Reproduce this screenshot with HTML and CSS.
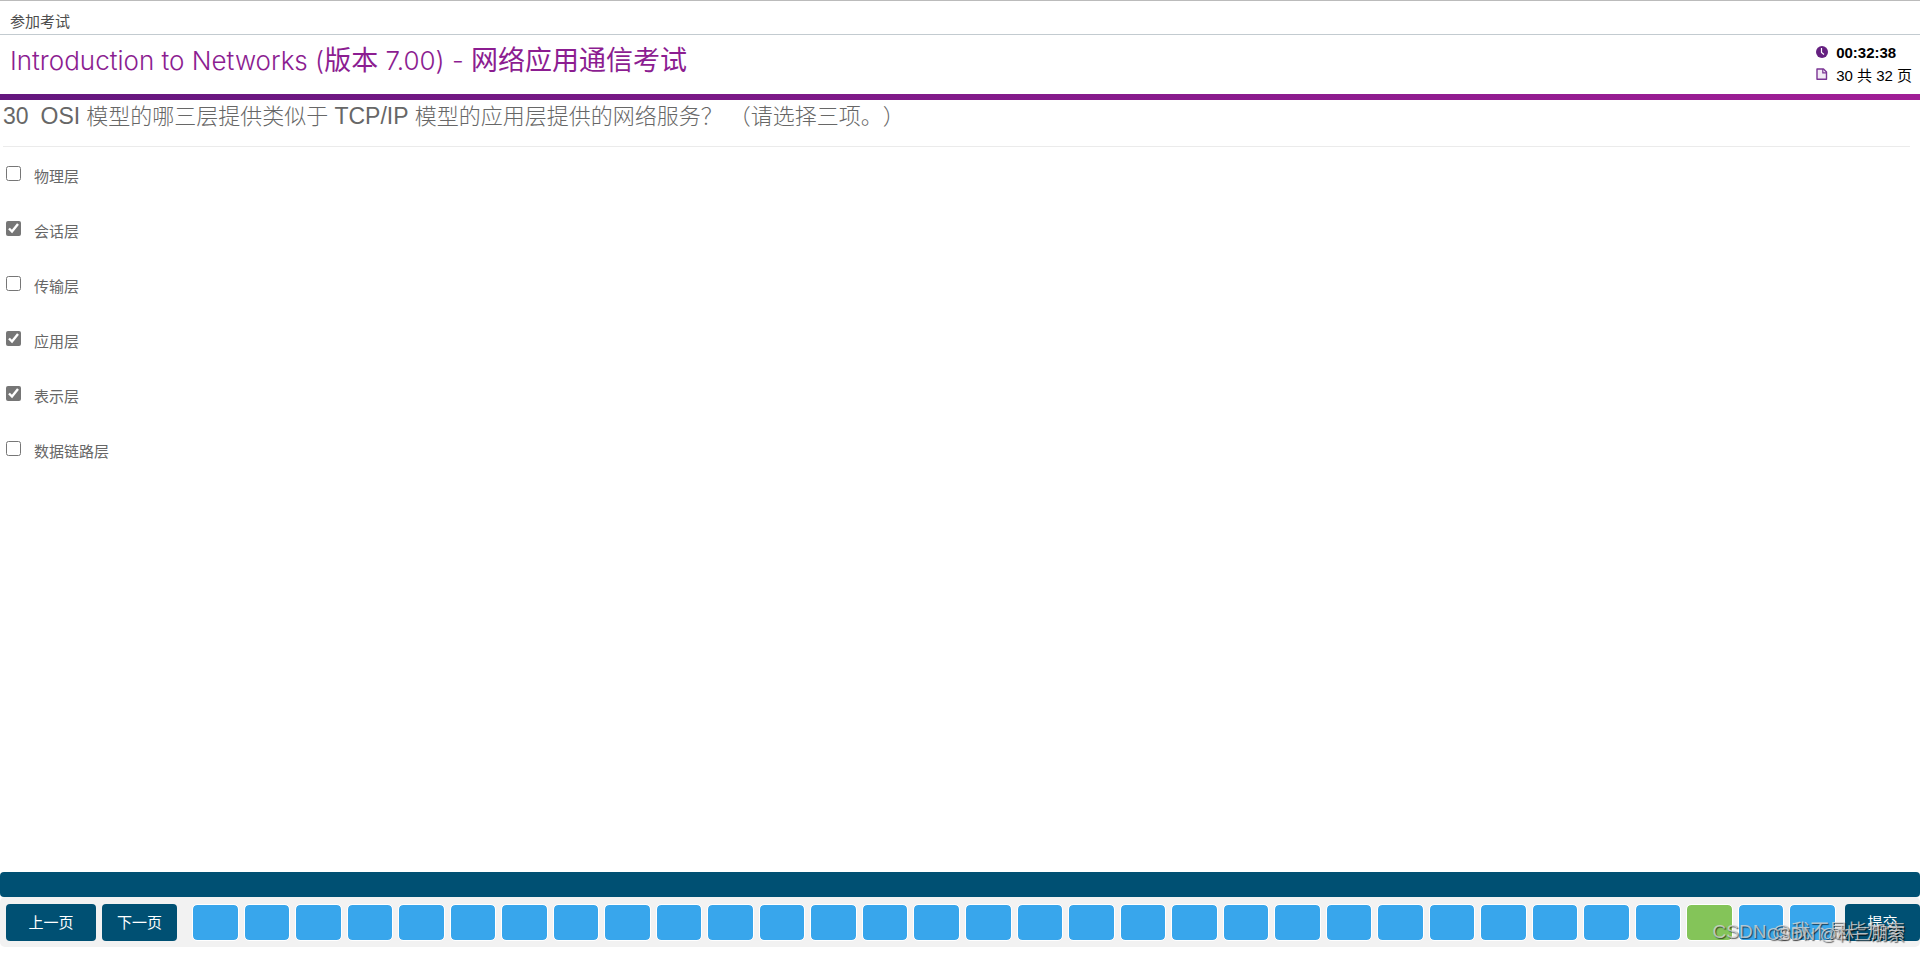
FILE: index.html
```html
<!DOCTYPE html>
<html lang="zh-CN">
<head>
  <meta charset="UTF-8">
  <meta name="viewport" content="width=device-width, initial-scale=1.0">
  <title>参加考试</title>
  <link rel="stylesheet" href="styles.css">
</head>
<body>
  <div class="top-bar">参加考试</div>

  <header class="header">
    <h1>Introduction to Networks (<span class="zh">版本</span> 7.00) - <span class="zh">网络应用通信考试</span></h1>
    <div class="status">
      <div class="status-row timer">
        <svg class="icon" viewBox="0 0 12 12">
          <circle cx="6" cy="6" r="6" fill="#652080"/>
          <path d="M5.5 2v4.5l2.5 2" fill="none" stroke="#fff" stroke-width="1.2"/>
        </svg>
        <span>00:32:38</span>
      </div>
      <div class="status-row">
        <svg class="icon" viewBox="0 0 12 12">
          <path d="M1 1h6.5l3 3v7.2h-9.5z" fill="#f3eaf5" stroke="#7b3494" stroke-width="1.4" stroke-linejoin="round"/>
          <path d="M6.8 1v3.8h3.8" fill="none" stroke="#7b3494" stroke-width="1.2"/>
        </svg>
        <span>30 共 32 页</span>
      </div>
    </div>
  </header>
  <div class="stripe"></div>

  <main class="question">
    <h2><span class="en number">30</span><span class="en">OSI</span> 模型的哪三层提供类似于 <span class="en">TCP/IP</span> 模型的应用层提供的网络服务？ （请选择三项。）</h2>
    <ul class="answers">
      <li><input type="checkbox" id="a1"><label for="a1">物理层</label></li>
      <li><input type="checkbox" id="a2" checked><label for="a2">会话层</label></li>
      <li><input type="checkbox" id="a3"><label for="a3">传输层</label></li>
      <li><input type="checkbox" id="a4" checked><label for="a4">应用层</label></li>
      <li><input type="checkbox" id="a5" checked><label for="a5">表示层</label></li>
      <li><input type="checkbox" id="a6"><label for="a6">数据链路层</label></li>
    </ul>
  </main>

  <footer class="footer">
    <div class="footer-bar"></div>
    <div class="nav">
      <button class="btn prev">上一页</button>
      <button class="btn">下一页</button>
      <div class="pages" id="pages"></div>
      <button class="btn">提交</button>
    </div>
    <div class="watermark">CSDN @我不是毕加索</div>
    <div class="watermark small">CSDN @林三朋索</div>
  </footer>

  <script>
    var pages = document.getElementById('pages');
    for (var i = 1; i <= 32; i++) {
      var page = document.createElement('button');
      page.className = i === 30 ? 'page current' : 'page';
      page.setAttribute('aria-label', i);
      pages.appendChild(page);
    }
  </script>
</body>
</html>
```

FILE: styles.css
```css
* {
  box-sizing: border-box;
}

body {
  font-family: "Liberation Sans", "Noto Sans CJK SC", sans-serif;
  font-size: 15px;
  margin: 0;
  padding-bottom: 6px;
  min-height: 100vh;
  display: flex;
  flex-direction: column;
  color: #676767;
  background-color: #fff;
  border-top: 1px solid #bbb;
}

.top-bar {
  height: 34px;
  padding: 10px 10px 0;
  line-height: 22px;
  color: #4d4d4d;
  border-bottom: 1px solid #c3cbd0;
}

.header {
  display: flex;
  justify-content: space-between;
  height: 59px;
  padding: 6px 8px 0 10px;
}

h1 {
  margin: 0;
  font-family: Inter, "Noto Sans CJK SC", sans-serif;
  font-size: 26px;
  font-weight: 300;
  line-height: 36px;
  color: #8c1d91;
}

.zh {
  font-family: "Noto Sans CJK SC", sans-serif;
  font-size: 27px;
  font-weight: 400;
}

.status {
  color: #000;
}

.status-row {
  display: flex;
  align-items: center;
  gap: 8px;
  height: 22px;
}

.timer {
  font-weight: bold;
}

.icon {
  width: 12px;
  height: 12px;
}

.stripe {
  height: 6px;
  background: linear-gradient(to right, #64167e, #a01e96);
}

.question {
  flex: 1;
  padding: 0 10px 0 3px;
}

h2 {
  margin: 0;
  height: 47px;
  font-size: 22px;
  font-weight: 300;
  line-height: 32px;
  text-spacing-trim: space-all;
  border-bottom: 1px solid #ebebeb;
}

.en {
  font-size: 23px;
}

.number {
  margin-right: 12px;
}

.answers {
  list-style: none;
  margin: 0;
  padding: 18px 0 0 3px;
}

.answers li {
  display: flex;
  align-items: flex-start;
  gap: 13px;
  height: 55px;
}

.answers input {
  width: 15px;
  height: 15px;
  margin: 1px 0 0;
  accent-color: #767676;
}

.answers label {
  line-height: 24px;
}

.footer {
  position: relative;
}

.footer-bar {
  height: 25px;
  background-color: #005073;
  border-radius: 4px;
}

.nav {
  display: flex;
  height: 50px;
  padding: 7px 0 6px 6px;
  gap: 6px;
  background-color: #f2f2f2;
  border-radius: 5px;
}

.btn {
  width: 75px;
  padding: 0 0 2px;
  font-family: inherit;
  font-size: 15px;
  color: #fff;
  background-color: #005073;
  border: none;
  border-radius: 4px;
}

.prev {
  width: 90px;
}

.pages {
  flex: 1;
  display: grid;
  grid-template-columns: repeat(32, 1fr);
  gap: 5px;
  margin: 0 3px 0 9px;
}

.page {
  padding: 0;
  background-color: #38a6ec;
  background-clip: padding-box;
  border: 1px solid #fff;
  border-radius: 5px;
}

.current {
  background-color: #84c459;
}

.watermark {
  position: absolute;
  right: 15px;
  bottom: 1px;
  font-size: 19px;
  line-height: 28px;
  color: rgba(215, 215, 215, 0.8);
  text-shadow: 1px 1px 1px rgba(0, 0, 0, 0.6);
  pointer-events: none;
}

.small {
  bottom: 0;
  font-size: 17px;
  line-height: 24px;
}
```
